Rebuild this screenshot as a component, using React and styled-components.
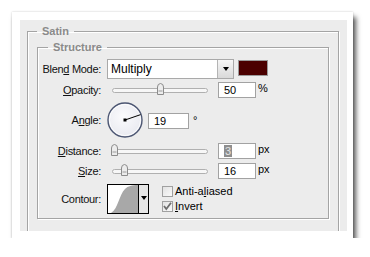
import styled, { createGlobalStyle } from "styled-components"

const GlobalStyle = createGlobalStyle`
  html, body {
    margin: 0;
    padding: 0;
    background: #ffffff;
  }
  body {
    font-family: "Liberation Sans", Arial, sans-serif;
    font-size: 11px;
    color: #000;
  }
`

const rows = { opacity: 50, angle: 19, distance: 3, size: 16 }

function Thumb() {
  return (
    <svg width="9" height="12" viewBox="0 0 9 12">
      <path d="M1.5 11.5 V4 Q1.5 0.8 4.5 0.5 Q7.5 0.8 7.5 4 V11.5 Z" fill="#ececec" stroke="#8c8c8c" />
      <rect x="2.5" y="7" width="4" height="2" fill="#c4c4c4" />
    </svg>
  )
}

function Slider({ pct }) {
  return (
    <SliderBox>
      <Track>
        <ThumbWrap style={{ left: `${pct}%` }}>
          <Thumb />
        </ThumbWrap>
      </Track>
    </SliderBox>
  )
}

function Dial({ angle }) {
  const r = 16.5
  const a = (angle * Math.PI) / 180
  const x = 18 + Math.cos(a) * r
  const y = 18 - Math.sin(a) * r
  return (
    <svg width="37" height="37" viewBox="0 0 37 37">
      <defs>
        <radialGradient id="dialFill" cx="0.45" cy="0.4" r="0.7">
          <stop offset="0" stopColor="#fbfbfd" />
          <stop offset="1" stopColor="#e6e7ee" />
        </radialGradient>
      </defs>
      <circle cx="18" cy="18" r="17" fill="url(#dialFill)" stroke="#4c5672" strokeWidth="1.4" />
      <circle cx="18" cy="18" r="15.6" fill="none" stroke="#ffffff" strokeWidth="0.8" />
      <line x1="18" y1="18" x2={x} y2={y} stroke="#000" strokeWidth="1" />
      <rect x="16.5" y="16.5" width="3" height="3" fill="#000" />
    </svg>
  )
}

function Check({ checked, children }) {
  return (
    <CheckLine>
      <Box>
        {checked && (
          <svg width="11" height="11" viewBox="0 0 11 11">
            <path d="M2 5 L4.3 8 L9 1.8" fill="none" stroke="#6e6e6e" strokeWidth="1.8" />
          </svg>
        )}
      </Box>
      <span>{children}</span>
    </CheckLine>
  )
}

function App() {
  return (
    <>
      <GlobalStyle />
      <Card>
        <Panel>
          <OuterSet>
            <Legend>Satin</Legend>
            <InnerSet>
              <InnerLegend>Structure</InnerLegend>
              <Form>
                <Row>
                  <Label>Blen<u>d</u> Mode:</Label>
                  <Controls>
                    <Select>
                      <span>Multiply</span>
                      <DropBtn>
                        <Tri />
                      </DropBtn>
                    </Select>
                    <Swatch $color="#4b0000" />
                  </Controls>
                </Row>
                <Row $mt={3}>
                  <Label><u>O</u>pacity:</Label>
                  <Controls>
                    <Slider pct={rows.opacity} />
                    <Field>{rows.opacity}</Field>
                    <Unit>%</Unit>
                  </Controls>
                </Row>
                <Row $mt={4}>
                  <Label>A<u>n</u>gle:</Label>
                  <Controls>
                    <Dial angle={rows.angle} />
                    <Field $w={41} $ml={4}>{rows.angle}</Field>
                    <Unit $up>°</Unit>
                  </Controls>
                </Row>
                <Row $mt={4}>
                  <Label><u>D</u>istance:</Label>
                  <Controls>
                    <Slider pct={1} />
                    <Field><Selected>{rows.distance}</Selected></Field>
                    <Unit>px</Unit>
                  </Controls>
                </Row>
                <Row $mt={4}>
                  <Label><u>S</u>ize:</Label>
                  <Controls>
                    <Slider pct={12} />
                    <Field>{rows.size}</Field>
                    <Unit>px</Unit>
                  </Controls>
                </Row>
                <Row $mt={5}>
                  <Label>Contour:</Label>
                  <Controls $top>
                    <Contour>
                      <ContourPic>
                        <svg width="30" height="28" viewBox="0 0 30 28">
                          <path d="M3 28 C10 24 11 10 17 4 C20 1 24 0 30 0 L30 28 Z" fill="#a8a8a8" />
                        </svg>
                      </ContourPic>
                      <ContourBtn>
                        <Tri />
                      </ContourBtn>
                    </Contour>
                    <Checks>
                      <Check>Anti-a<u>l</u>iased</Check>
                      <Check checked><u>I</u>nvert</Check>
                    </Checks>
                  </Controls>
                </Row>
              </Form>
            </InnerSet>
          </OuterSet>
        </Panel>
      </Card>
    </>
  )
}

const Card = styled.div`
  margin: 12px 0 0 12px;
  width: 341px;
  height: 226px;
  box-sizing: border-box;
  padding: 8px 6px 7px 8px;
  background: #ffffff;
  box-shadow: 0 0 2px rgba(0, 0, 0, 0.2), 3px 5px 5px rgba(0, 0, 0, 0.65);
`

const Panel = styled.div`
  height: 100%;
  box-sizing: border-box;
  background: #ececec;
  overflow: hidden;
  padding: 5px 8px 0 7px;
`

const OuterSet = styled.fieldset`
  margin: 0;
  padding: 4px 9px 16px 9px;
  border: 1px solid #a4a4a4;
  box-shadow: inset 1px 1px 0 #ffffff, 1px 1px 0 #ffffff;
  min-width: 0;
`

const Legend = styled.legend`
  padding: 0 5px;
  font-weight: bold;
  font-size: 11px;
  line-height: 12px;
  color: #8a8a8a;
`

const InnerSet = styled(OuterSet)`
  padding: 6px 9px 4px 0;
`

const InnerLegend = styled(Legend)`
  margin-left: 10px;
`

const Form = styled.div`
  display: flex;
  flex-direction: column;
`

const Row = styled.div`
  display: grid;
  grid-template-columns: 63px 1fr;
  column-gap: 6px;
  align-items: center;
  margin-top: ${p => p.$mt || 0}px;
`

const Label = styled.div`
  text-align: right;
  white-space: nowrap;
  letter-spacing: -0.3px;
  line-height: 13px;
  color: #111;
`

const Controls = styled.div`
  display: flex;
  align-items: ${p => (p.$top ? "flex-start" : "center")};
`

const Select = styled.div`
  width: 127px;
  height: 20px;
  box-sizing: border-box;
  display: flex;
  align-items: center;
  justify-content: space-between;
  background: #ffffff;
  border: 1px solid #a9a9a9;
  padding-left: 3px;
  font-size: 12px;
`

const DropBtn = styled.div`
  width: 16px;
  height: 18px;
  box-sizing: border-box;
  display: flex;
  align-items: center;
  justify-content: center;
  background: linear-gradient(#f6f6f6, #d9d9d9);
  border-left: 1px solid #b4b4b4;
`

const Tri = styled.div`
  width: 0;
  height: 0;
  border-left: 3.5px solid transparent;
  border-right: 3.5px solid transparent;
  border-top: 4px solid #000;
`

const Swatch = styled.div`
  width: 30px;
  height: 16px;
  box-sizing: border-box;
  margin-left: 4px;
  align-self: flex-start;
  margin-top: 1px;
  border: 1px solid #9a9a9a;
  background: ${p => p.$color};
`

const SliderBox = styled.div`
  width: 105px;
  box-sizing: border-box;
  padding: 0 4px 0 5px;
`

const Track = styled.div`
  position: relative;
  height: 3px;
  background: #f7f7f7;
  border: 1px solid #b0b0b0;
  border-radius: 3px;
`

const ThumbWrap = styled.div`
  position: absolute;
  top: -6px;
  margin-left: -4px;
  line-height: 0;
`

const Field = styled.div`
  width: ${p => p.$w || 38}px;
  height: 16px;
  box-sizing: border-box;
  margin-left: ${p => (p.$ml === undefined ? 6 : p.$ml)}px;
  padding-left: 5px;
  background: #ffffff;
  border: 1px solid #a2a2a2;
  display: flex;
  align-items: center;
  font-size: 11px;
`

const Selected = styled.span`
  background: #8e8e8e;
  color: #e4e4e4;
  padding: 0 1px;
  line-height: 12px;
`

const Unit = styled.span`
  margin-left: ${p => (p.$up ? 4 : 2)}px;
  align-self: ${p => (p.$up ? "flex-start" : "center")};
  margin-top: ${p => (p.$up ? 12 : -4)}px;
  font-size: 11px;
`

const Contour = styled.div`
  display: flex;
  width: 42px;
  height: 30px;
  box-sizing: border-box;
  border: 1px solid #000;
  background: #e6e6e6;
`

const ContourPic = styled.div`
  width: 30px;
  height: 28px;
  background: #ffffff;
  border-right: 1px solid #000;
  line-height: 0;
`

const ContourBtn = styled.div`
  flex: 1;
  display: flex;
  align-items: center;
  justify-content: center;
  padding-bottom: 2px;
`

const Checks = styled.div`
  display: flex;
  flex-direction: column;
  gap: 4px;
  margin-left: 13px;
  padding-top: 2px;
`

const CheckLine = styled.div`
  display: flex;
  align-items: center;
  gap: 2px;
  line-height: 11px;
`

const Box = styled.div`
  width: 11px;
  height: 11px;
  box-sizing: border-box;
  border: 1px solid #a0a0a0;
  background: linear-gradient(135deg, #e2e2e2, #fafafa);
  line-height: 0;
  svg {
    margin: -1px 0 0 -1px;
  }
`

export default App
